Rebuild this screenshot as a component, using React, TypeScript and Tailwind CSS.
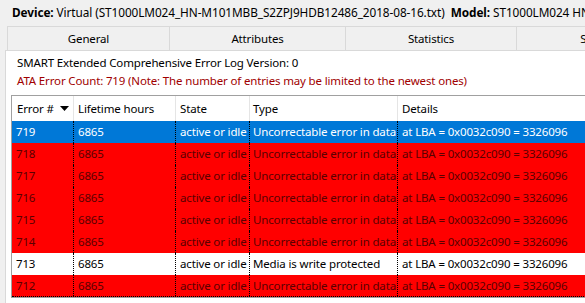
import React from 'react'

type Row = {
  num: string
  hours: string
  state: string
  type: string
  details: string
  kind: 'selected' | 'error' | 'normal'
}

const lba = 'at LBA = 0x0032c090 = 3326096'

const rows: Row[] = [
  { num: '719', hours: '6865', state: 'active or idle', type: 'Uncorrectable error in data', details: lba, kind: 'selected' },
  { num: '718', hours: '6865', state: 'active or idle', type: 'Uncorrectable error in data', details: lba, kind: 'error' },
  { num: '717', hours: '6865', state: 'active or idle', type: 'Uncorrectable error in data', details: lba, kind: 'error' },
  { num: '716', hours: '6865', state: 'active or idle', type: 'Uncorrectable error in data', details: lba, kind: 'error' },
  { num: '715', hours: '6865', state: 'active or idle', type: 'Uncorrectable error in data', details: lba, kind: 'error' },
  { num: '714', hours: '6865', state: 'active or idle', type: 'Uncorrectable error in data', details: lba, kind: 'error' },
  { num: '713', hours: '6865', state: 'active or idle', type: 'Media is write protected', details: lba, kind: 'normal' },
  { num: '712', hours: '6865', state: 'active or idle', type: 'Uncorrectable error in data', details: lba, kind: 'error' },
]

const tabs = [
  { label: 'General', w: 'w-[163px]' },
  { label: 'Attributes', w: 'w-[176px]' },
  { label: 'Statistics', w: 'w-[171px]' },
  { label: 'Self-Tests', w: 'w-[176px]' },
]

const rowStyle = {
  selected: 'bg-[#0078d7] text-white',
  error: 'bg-[#ff0000] text-[#5a0000]',
  normal: 'bg-white text-black',
}

export default function App() {
  return (
    <div
      className="w-[585px] h-[303px] overflow-hidden bg-[#f0f0f0] text-[11.5px] tracking-[-0.15px] text-black"
      style={{ fontFamily: '"Segoe UI", "Noto Sans", sans-serif' }}
    >
      {/* Device / model line */}
      <div className="h-[26px] pl-[12px] pt-[3px] leading-[18px] text-[11.8px] tracking-[-0.08px] whitespace-nowrap overflow-hidden">
        <span className="font-bold">Device:</span> Virtual (ST1000LM024_HN-M101MBB_S2ZPJ9HDB12486_2018-08-16.txt)
        <span className="ml-[6px] font-bold">Model:</span> ST1000LM024 HN-M101MBB
      </div>

      {/* Tabs */}
      <div className="flex h-[24px] ml-[7px] border-t border-[#d9d9d9] whitespace-nowrap">
        {tabs.map((t, i) => (
          <div
            key={t.label}
            className={`${t.w} shrink-0 flex items-center justify-center border-r border-[#d9d9d9] ${i === 0 ? 'border-l' : ''}`}
          >
            {t.label}
          </div>
        ))}
      </div>

      {/* Panel */}
      <div className="ml-[5px] h-[253px] bg-white border-l border-t border-[#d9d9d9] pl-[5px] pt-[3px] overflow-hidden">
        <div className="pl-[6px] leading-[18px] whitespace-nowrap">
          SMART Extended Comprehensive Error Log Version: 0
        </div>
        <div className="pl-[6px] leading-[18px] whitespace-nowrap text-[#a00000]">
          ATA Error Count: 719 (Note: The number of entries may be limited to the newest ones)
        </div>

        {/* Table */}
        <div className="mt-[5px] w-[640px] border border-[#a0a0a0] bg-white whitespace-nowrap">
          <div className="grid grid-cols-[61px_102px_74px_148px_1fr] h-[25px] items-stretch">
            <div className="flex items-center pl-[5px]">
              Error #
              <svg width="9" height="5" viewBox="0 0 9 5" className="ml-[6px]">
                <path d="M0 0 H9 L4.5 5 Z" fill="#000" />
              </svg>
            </div>
            <div className="flex items-center pl-[4px] border-l border-[#e5e5e5]">Lifetime hours</div>
            <div className="flex items-center pl-[4px] border-l border-[#e5e5e5]">State</div>
            <div className="flex items-center pl-[3px] border-l border-[#e5e5e5]">Type</div>
            <div className="flex items-center pl-[4px] border-l border-[#e5e5e5]">Details</div>
          </div>
          {rows.map((r, i) => (
            <div
              key={r.num}
              className={`grid grid-cols-[61px_102px_74px_148px_1fr] h-[22px] ${rowStyle[r.kind]} ${i === rows.length - 1 ? 'border-b border-dotted border-black' : ''}`}
            >
              <div className="flex items-center pl-[4px]">{r.num}</div>
              <div className="flex items-center pl-[4px] border-l border-dotted border-black">{r.hours}</div>
              <div className="flex items-center pl-[4px] border-l border-dotted border-black overflow-hidden">{r.state}</div>
              <div className="flex items-center pl-[3px] border-l border-dotted border-black overflow-hidden">{r.type}</div>
              <div className="flex items-center pl-[4px] border-l border-dotted border-black">{r.details}</div>
            </div>
          ))}
        </div>
      </div>
    </div>
  )
}
